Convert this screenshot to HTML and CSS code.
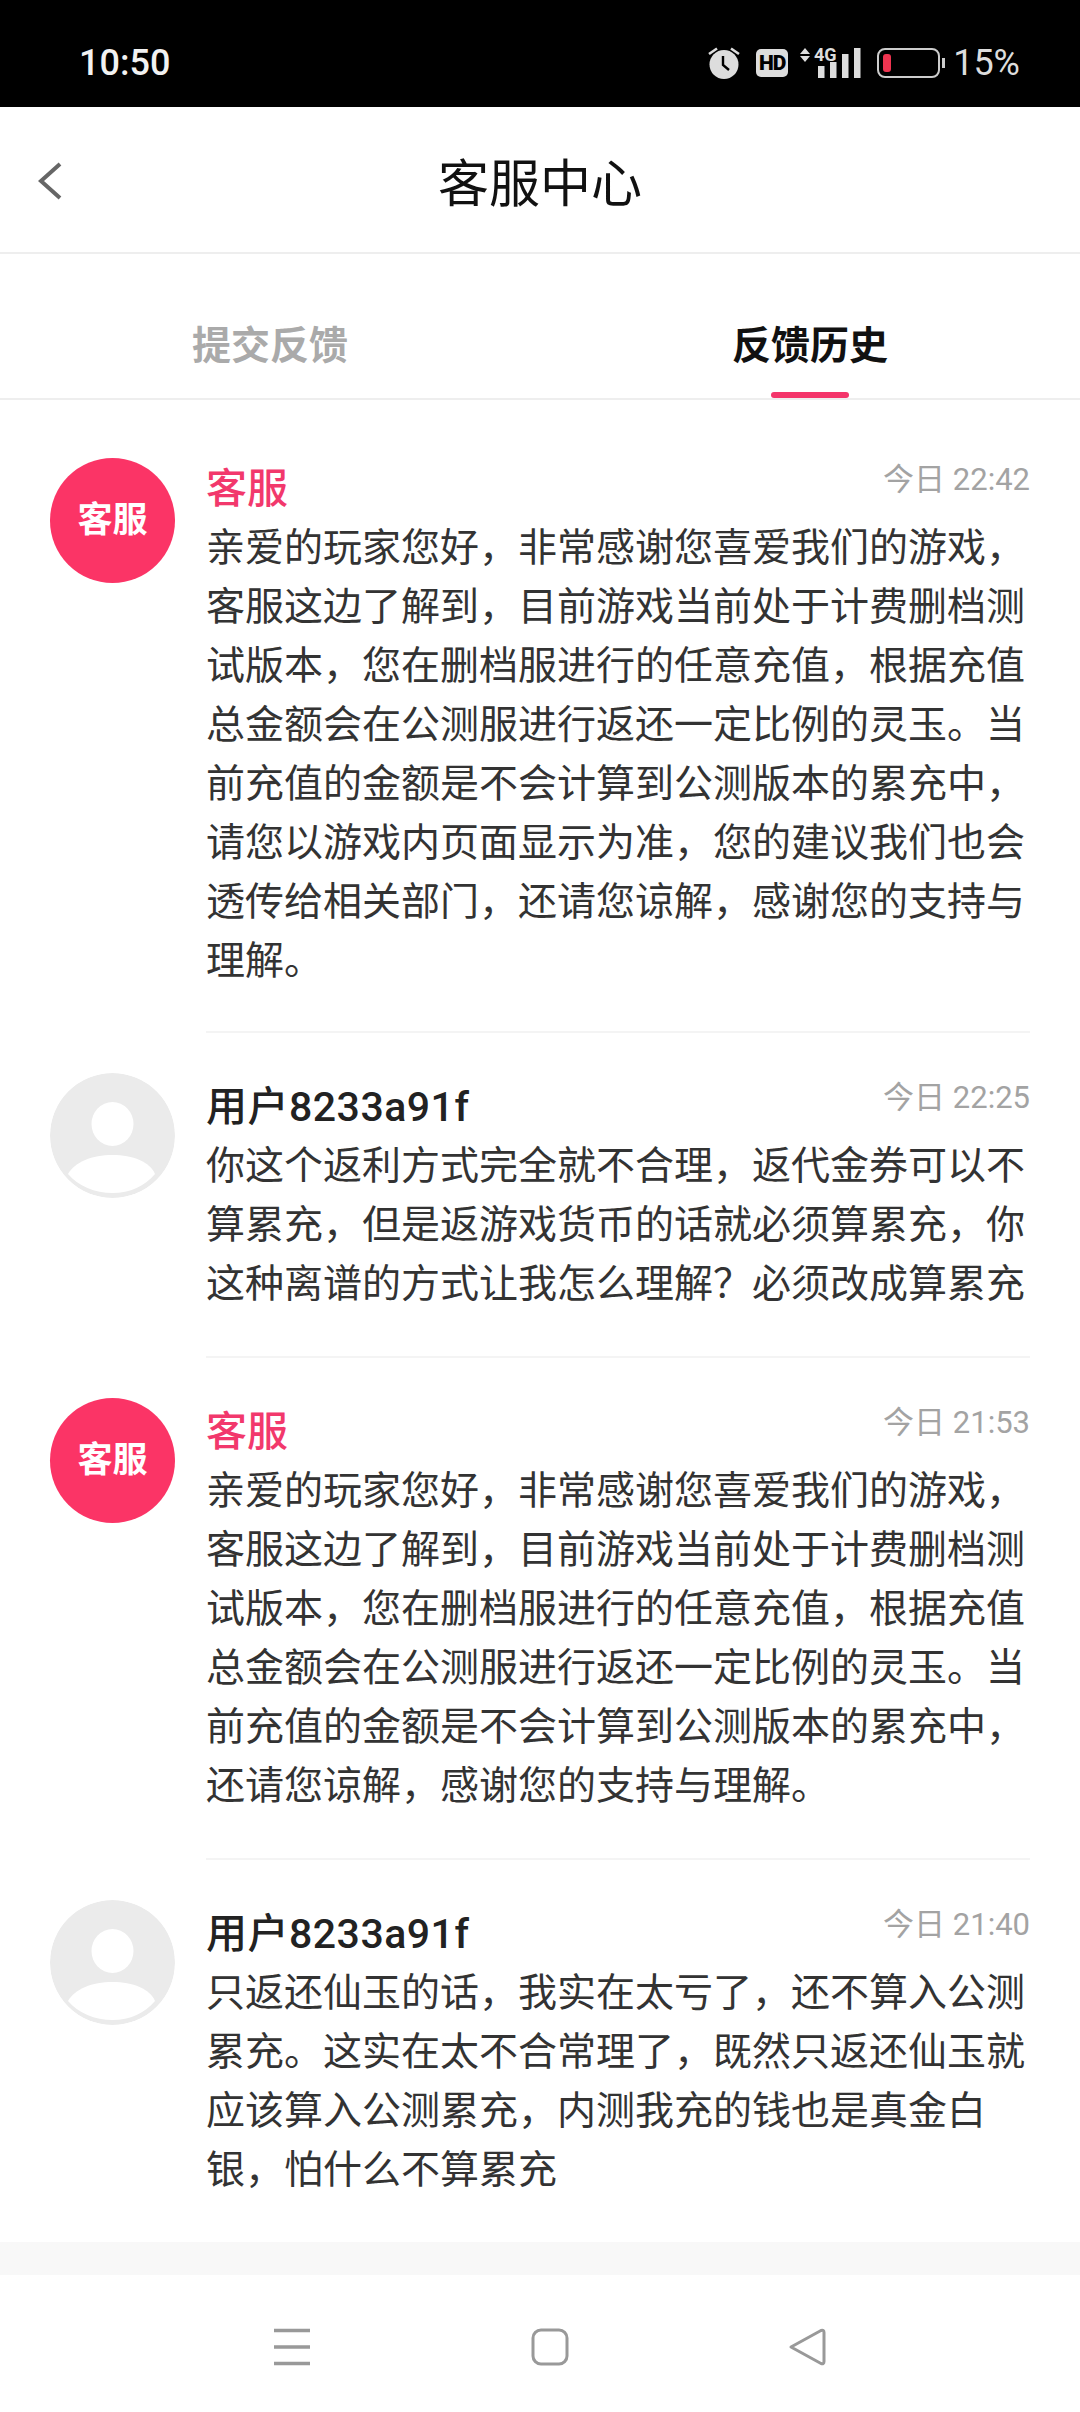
FILE: index.html
```html
<!DOCTYPE html>
<html lang="zh-CN">
<head>
  <meta charset="UTF-8" />
  <meta name="viewport" content="width=device-width, initial-scale=1.0"/>
  <title>客服中心</title>
  <link rel="stylesheet" href="styles.css">
</head>
<body>
  <div class="status-bar">
    <span class="clock">10:50</span>
    <div class="status-icons">
      <svg class="ic-alarm" width="32" height="33" viewBox="0 0 32 33">
        <circle cx="16" cy="18.500" r="14.500" fill="#ddd"/>
        <path d="M15 10v9l6 5" fill="none" stroke="#000" stroke-width="2.400"/>
        <path d="M1 8l8-5.500M31 8l-8-5.500" stroke="#ddd" stroke-width="2.600" fill="none"/>
      </svg>
      <div class="hd-badge">HD</div>
      <svg class="ic-signal" width="61" height="40" viewBox="0 -4 61 40">
        <path d="M0 7L5 1l5 6zM0 9h10l-5 6z" fill="#ddd"/>
        <text x="14" y="14" class="net-text">4G</text>
        <rect x="18" y="19" width="6.500" height="12" fill="#ddd"/>
        <rect x="30" y="15" width="6.500" height="16" fill="#ddd"/>
        <rect x="42" y="7" width="6.500" height="24" fill="#ddd"/>
        <rect x="54" y="1" width="6.500" height="30" fill="#ddd"/>
      </svg>
      <div class="battery">
        <div class="battery-level"></div>
      </div>
      <span class="percent">15%</span>
    </div>
  </div>

  <header class="top-bar">
    <svg class="back-icon" width="26" height="38" viewBox="0 0 26 38">
      <path d="M23 2L4 19l19 17" fill="none" stroke="#666" stroke-width="4"/>
    </svg>
    <h1>客服中心</h1>
  </header>

  <nav class="tabs">
    <div class="tab">提交反馈</div>
    <div class="tab active">反馈历史</div>
  </nav>

  <main class="feed">
    <div class="item">
      <div class="avatar staff">客服</div>
      <div class="item-main">
        <div class="item-head">
          <span class="name staff-name">客服</span>
          <span class="time">今日 22:42</span>
        </div>
        <p>亲爱的玩家您好，非常感谢您喜爱我们的游戏，<br>客服这边了解到，目前游戏当前处于计费删档测<br>试版本，您在删档服进行的任意充值，根据充值<br>总金额会在公测服进行返还一定比例的灵玉。当<br>前充值的金额是不会计算到公测版本的累充中，<br>请您以游戏内页面显示为准，您的建议我们也会<br>透传给相关部门，还请您谅解，感谢您的支持与<br>理解。</p>
      </div>
    </div>

    <div class="item">
      <svg class="avatar" viewBox="0 0 125 125">
        <circle cx="62.500" cy="62.500" r="62.500" fill="#ebebeb"/>
        <ellipse cx="62.500" cy="51" rx="21" ry="22" fill="#fff"/>
        <path d="M18 101C25 89 42 82 62.500 82C83 82 100 89 105 101C95 113 80 120 62.500 120C45 120 28 113 18 101Z" fill="#fff"/>
      </svg>
      <div class="item-main">
        <div class="item-head">
          <span class="name">用户8233a91f</span>
          <span class="time">今日 22:25</span>
        </div>
        <p>你这个返利方式完全就不合理，返代金券可以不<br>算累充，但是返游戏货币的话就必须算累充，你<br>这种离谱的方式让我怎么理解？必须改成算累充</p>
      </div>
    </div>

    <div class="item">
      <div class="avatar staff">客服</div>
      <div class="item-main">
        <div class="item-head">
          <span class="name staff-name">客服</span>
          <span class="time">今日 21:53</span>
        </div>
        <p>亲爱的玩家您好，非常感谢您喜爱我们的游戏，<br>客服这边了解到，目前游戏当前处于计费删档测<br>试版本，您在删档服进行的任意充值，根据充值<br>总金额会在公测服进行返还一定比例的灵玉。当<br>前充值的金额是不会计算到公测版本的累充中，<br>还请您谅解，感谢您的支持与理解。</p>
      </div>
    </div>

    <div class="item">
      <svg class="avatar" viewBox="0 0 125 125">
        <circle cx="62.500" cy="62.500" r="62.500" fill="#ebebeb"/>
        <ellipse cx="62.500" cy="51" rx="21" ry="22" fill="#fff"/>
        <path d="M18 101C25 89 42 82 62.500 82C83 82 100 89 105 101C95 113 80 120 62.500 120C45 120 28 113 18 101Z" fill="#fff"/>
      </svg>
      <div class="item-main">
        <div class="item-head">
          <span class="name">用户8233a91f</span>
          <span class="time">今日 21:40</span>
        </div>
        <p>只返还仙玉的话，我实在太亏了，还不算入公测<br>累充。这实在太不合常理了，既然只返还仙玉就<br>应该算入公测累充，内测我充的钱也是真金白<br>银，怕什么不算累充</p>
      </div>
    </div>
  </main>

  <div class="band"></div>

  <div class="nav-bar">
    <svg width="38" height="38" viewBox="0 0 38 38">
      <path d="M1 2.500h36M1 19h36M1 35.500h36" stroke="#999" stroke-width="3.400" fill="none"/>
    </svg>
    <svg width="38" height="38" viewBox="0 0 38 38">
      <rect x="2" y="2" width="34" height="34" rx="8" fill="none" stroke="#999" stroke-width="3"/>
    </svg>
    <svg width="38" height="38" viewBox="0 0 38 38">
      <path d="M3 19L33 2.500Q36 1.500 36 4.500V33.500Q36 36.500 33 35.500Z" fill="none" stroke="#999" stroke-width="3" stroke-linejoin="round"/>
    </svg>
  </div>
</body>
</html>
```

FILE: styles.css
```css
* {
  box-sizing: border-box;
}

body {
  margin: 0;
  width: 1080px;
  height: 2412px;
  overflow: hidden;
  display: flex;
  flex-direction: column;
  background: #fff;
  font-family: Roboto, "Noto Sans CJK SC", sans-serif;
  color: #333;
}

.status-bar {
  height: 107px;
  background: #000;
  color: #fff;
  display: flex;
  justify-content: space-between;
  align-items: center;
  padding: 18px 60px 0 79px;
  flex-shrink: 0;
}

.clock {
  font-size: 36px;
  font-weight: 500;
  color: #f2f2f2;
}

.status-icons {
  display: flex;
  align-items: center;
  color: #ddd;
}

.hd-badge {
  width: 32px;
  height: 28px;
  margin-left: 16px;
  background: #ddd;
  border-radius: 5px;
  color: #000;
  font-size: 21px;
  font-weight: 900;
  line-height: 28px;
  text-align: center;
  letter-spacing: -1px;
}

.ic-signal {
  margin-left: 12px;
}

.net-text {
  font-size: 18px;
  font-weight: 700;
  fill: #ddd;
}

.battery {
  position: relative;
  width: 63px;
  height: 30px;
  margin-left: 16px;
  border: 2px solid #ccc;
  border-radius: 8px;
  padding: 4px;
}

.battery:after {
  content: "";
  position: absolute;
  right: -7px;
  top: 8px;
  width: 3px;
  height: 10px;
  background: #ccc;
}

.battery-level {
  width: 8px;
  height: 100%;
  background: #ee3450;
  border-radius: 3px;
}

.percent {
  margin-left: 13px;
  font-size: 36px;
  color: #ddd;
}

.top-bar {
  position: relative;
  height: 147px;
  border-bottom: 2px solid #eee;
  display: flex;
  align-items: center;
  justify-content: center;
  flex-shrink: 0;
}

.top-bar h1 {
  margin: 0;
  font-size: 51px;
  font-weight: 400;
  color: #111;
}

.back-icon {
  position: absolute;
  left: 37px;
  top: 55px;
}

.tabs {
  height: 146px;
  display: flex;
  border-bottom: 2px solid #eee;
  flex-shrink: 0;
}

.tab {
  position: relative;
  flex: 1;
  text-align: center;
  font-size: 39px;
  font-weight: 700;
  color: #aaa;
  line-height: 50px;
  padding-top: 67px;
}

.tab.active {
  color: #111;
}

.tab.active:after {
  content: "";
  position: absolute;
  left: 50%;
  bottom: 0;
  width: 78px;
  height: 6px;
  margin-left: -39px;
  background: #f4356a;
  border-radius: 3px;
}

.feed {
  flex: 1;
  padding-left: 50px;
  padding-right: 50px;
}

.item {
  display: flex;
  gap: 31px;
  padding-top: 40px;
}

.item:first-child {
  padding-top: 58px;
}

.avatar {
  width: 125px;
  height: 125px;
  border-radius: 50%;
  flex-shrink: 0;
}

.avatar.staff {
  background: #fb3466;
  color: #fff;
  font-size: 35px;
  font-weight: 700;
  line-height: 125px;
  text-align: center;
}

.item-main {
  flex: 1;
  padding-top: 3px;
  padding-bottom: 42px;
  border-bottom: 2px solid #f4f4f4;
}

.item:first-child .item-main {
  padding-top: 0;
  padding-bottom: 40px;
}

.item:last-child .item-main {
  border-bottom: none;
}

.item-head {
  display: flex;
  justify-content: space-between;
  align-items: flex-start;
  height: 61px;
}

.name {
  font-size: 41px;
  font-weight: 500;
  letter-spacing: 0.5px;
  color: #222;
  line-height: 62px;
}

.staff-name {
  color: #f2386c;
  letter-spacing: 0;
}

.time {
  font-size: 31px;
  color: #a3a3a3;
  line-height: 44px;
}

.item-main p {
  margin: 0;
  font-size: 39px;
  line-height: 59px;
  color: #333;
  white-space: nowrap;
}

.band {
  height: 33px;
  background: #f8f8f8;
  flex-shrink: 0;
}

.nav-bar {
  height: 137px;
  display: flex;
  flex-shrink: 0;
  padding: 53px 254px 0 273px;
  justify-content: space-between;
  align-items: flex-start;
}
```
